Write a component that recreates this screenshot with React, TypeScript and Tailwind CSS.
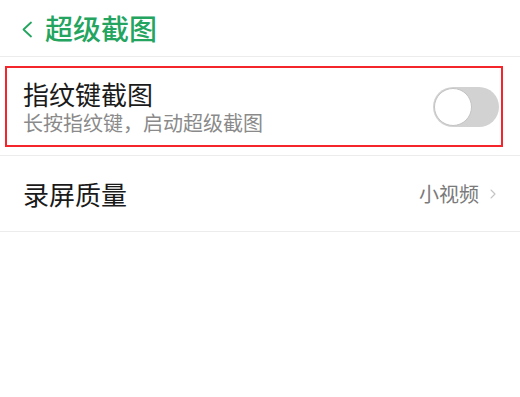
import { ChevronRight } from 'lucide-react';

const font = { fontFamily: '"Noto Sans CJK SC", "Noto Sans", sans-serif' };

function Toggle({ on = false }: { on?: boolean }) {
  return (
    <div className={`flex h-[40px] w-[66px] items-center rounded-full p-[1px] ${on ? 'justify-end bg-[#23a45f]' : 'bg-[#d2d2d2]'}`}>
      <div className="h-[38px] w-[38px] rounded-full border border-[#c4c4c4] bg-white" />
    </div>
  );
}

export default function App() {
  return (
    <div className="h-[397px] w-[520px] overflow-hidden bg-white" style={font}>
      <header className="flex h-[57px] items-center border-b border-[#ececec] pl-[21px]">
        <svg width="12" height="17" viewBox="0 0 12 17" className="mt-[2px]">
          <path d="M10 1.5 L2.5 8.5 L10 15.5" fill="none" stroke="#23a45f" strokeWidth="1.8" strokeLinecap="round" strokeLinejoin="round" />
        </svg>
        <h1 className="ml-[12px] text-[28px] font-medium leading-none text-[#23a45f]">超级截图</h1>
      </header>

      <div className="border-b border-[#ececec] pt-[9px] pb-[8px]">
        <div className="ml-[5px] mr-[17px] flex h-[81px] items-center justify-between border-2 border-[#f5262b] pl-[16px] pr-[2px]">
          <div className="flex flex-col">
            <span className="text-[26px] leading-[28px] text-[#1a1a1a]">指纹键截图</span>
            <span className="mt-[4px] text-[20px] leading-[22px] text-[#8a8a8a]">长按指纹键，启动超级截图</span>
          </div>
          <Toggle />
        </div>
      </div>

      <div className="flex h-[76px] items-center justify-between border-b border-[#ececec] pl-[23px] pr-[19px]">
        <span className="text-[26px] leading-none text-[#1a1a1a]">录屏质量</span>
        <div className="flex items-center gap-[6px]">
          <span className="text-[20px] leading-none text-[#7a7a7a]">小视频</span>
          <ChevronRight className="h-[16px] w-[16px] text-[#c4c4c4]" strokeWidth={1.6} />
        </div>
      </div>
    </div>
  );
}
